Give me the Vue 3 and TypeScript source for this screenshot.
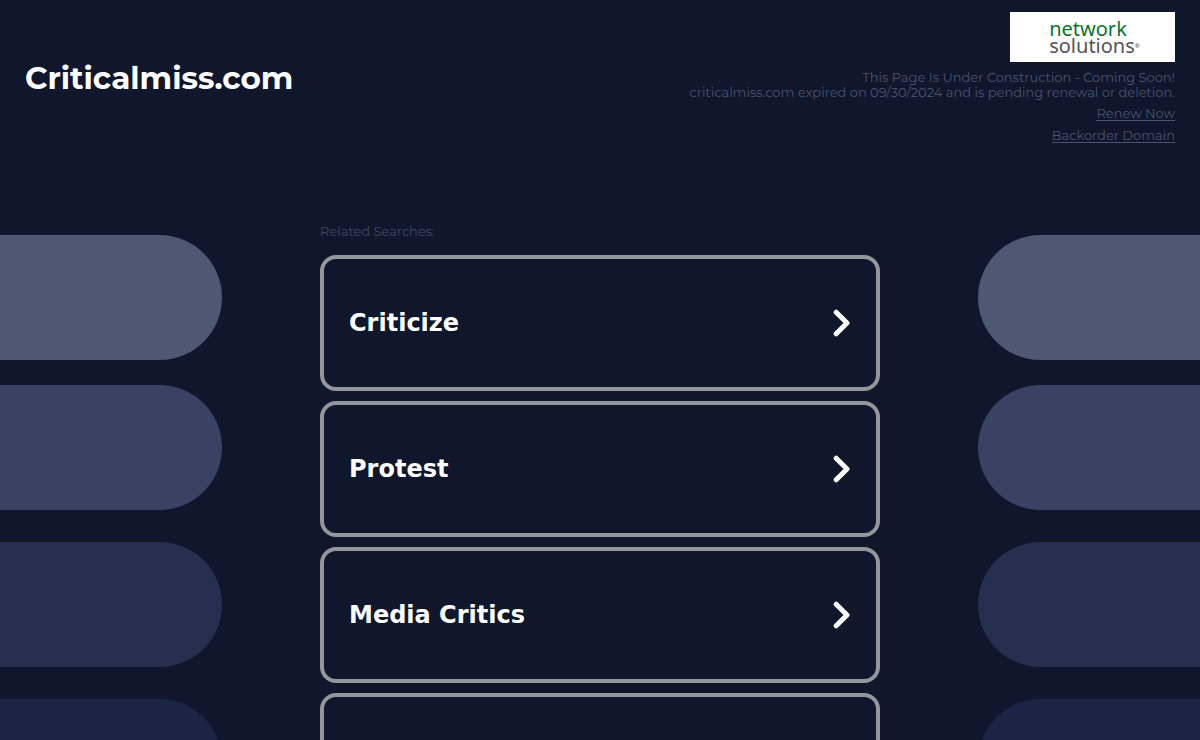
<script setup lang="ts">
interface Search {
  label: string
  href: string
}

const searches: Search[] = [
  { label: 'Criticize', href: '#criticize' },
  { label: 'Protest', href: '#protest' },
  { label: 'Media Critics', href: '#media-critics' },
  { label: '', href: '#more' },
]

const tones: string[] = ['slate', 'steel', 'navy', 'deep']
</script>

<template>
  <div class="page">
    <header class="top">
      <h1 class="domain">Criticalmiss.com</h1>
      <div class="notice">
        <a class="logo" href="#network-solutions">
          <span class="logo-text">
            <span class="logo-network">network</span>
            <span class="logo-solutions">solutions<span class="mark">®</span></span>
          </span>
        </a>
        <p class="message">
          This Page Is Under Construction - Coming Soon!<br />
          criticalmiss.com expired on 09/30/2024 and is pending renewal or deletion.
        </p>
        <a class="action" href="#renew">Renew Now</a>
        <a class="action" href="#backorder">Backorder Domain</a>
      </div>
    </header>

    <main class="body">
      <div class="pills left" aria-hidden="true">
        <div v-for="tone in tones" :key="tone" class="pill" :class="tone"></div>
      </div>
      <section class="searches">
        <h2 class="caption">Related Searches:</h2>
        <a v-for="item in searches" :key="item.href" class="card" :href="item.href">
          <span class="label">{{ item.label }}</span>
          <svg class="chevron" viewBox="0 0 18 28" aria-hidden="true">
            <path d="M3.2 3.2 L14 14 L3.2 24.8" />
          </svg>
        </a>
      </section>
      <div class="pills right" aria-hidden="true">
        <div v-for="tone in tones" :key="tone" class="pill" :class="tone"></div>
      </div>
    </main>
  </div>
</template>

<style>
body {
  margin: 0;
  background: #10162b;
}
</style>

<style scoped>
.page {
  height: 100vh;
  overflow: hidden;
  background: #10162b;
  color: #4e536f;
  font-family: Montserrat, Inter, "Open Sans", sans-serif;
  font-size: 13px;
  line-height: 15px;
}
.top {
  display: flex;
  justify-content: space-between;
  padding: 12px 25px 0;
}
.domain {
  margin: 48px 0 0;
  color: #fff;
  font-size: 31px;
  line-height: 36px;
  font-weight: 700;
}
.notice {
  display: flex;
  flex-direction: column;
  align-items: flex-end;
  text-align: right;
}
.logo {
  display: flex;
  justify-content: center;
  align-items: center;
  width: 165px;
  height: 50px;
  background: #fff;
  text-decoration: none;
}
.logo-text {
  display: flex;
  flex-direction: column;
  padding-left: 4px;
  text-align: left;
  font-family: "Noto Sans", sans-serif;
  font-size: 20px;
  line-height: 17px;
}
.logo-network {
  color: #08752c;
}
.logo-solutions {
  color: #55535a;
}
.mark {
  font-size: 6px;
  vertical-align: 5px;
  line-height: 6px;
}
.message {
  margin: 8px 0 6px;
}
.action {
  margin-bottom: 7px;
  border-bottom: 1px solid #4e536f;
  line-height: 14px;
  color: inherit;
  text-decoration: none;
}
.body {
  display: grid;
  grid-template-columns: 1fr 560px 1fr;
  padding-top: 74px;
}
.pills {
  display: flex;
  flex-direction: column;
  gap: 32px;
  padding-top: 11px;
}
.right {
  align-items: flex-end;
}
.pill {
  box-sizing: border-box;
  width: 222px;
  height: 125px;
}
.left .pill {
  border-radius: 0 63px 63px 0;
}
.right .pill {
  border-radius: 63px 0 0 63px;
}
.slate {
  margin-bottom: -7px;
  background: #4e5873;
}
.steel {
  background: #394263;
}
.navy {
  background: #262f4f;
}
.deep {
  background: #1b2444;
}
.caption {
  margin: 0 0 16px;
  font-size: 13px;
  line-height: 15px;
  font-weight: 400;
  color: #434865;
}
.card {
  box-sizing: border-box;
  display: flex;
  align-items: center;
  justify-content: space-between;
  height: 136px;
  margin-bottom: 10px;
  padding: 0 25px;
  border: 4px solid #969599;
  border-radius: 16px;
  color: #fff;
  text-decoration: none;
}
.label {
  font-family: Verdana, "DejaVu Sans", sans-serif;
  font-size: 24px;
  line-height: 30px;
  font-weight: 700;
}
.chevron {
  width: 18px;
  height: 28px;
  fill: none;
  stroke: #fff;
  stroke-width: 5;
  stroke-linecap: round;
  stroke-linejoin: round;
}
</style>
